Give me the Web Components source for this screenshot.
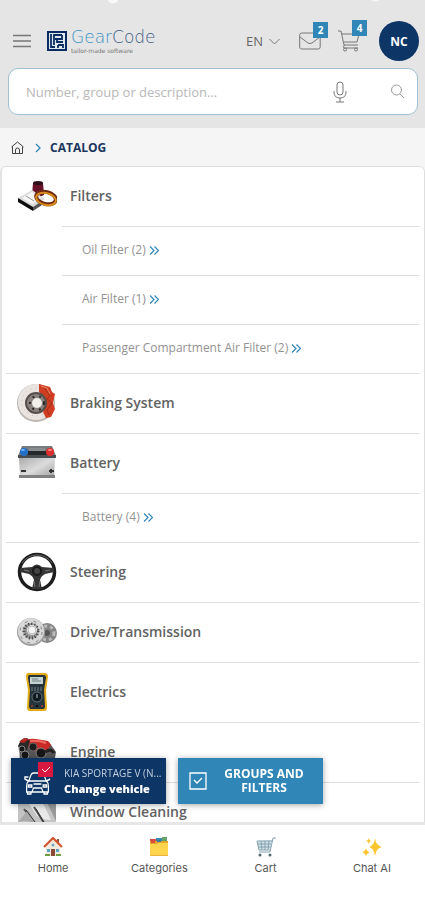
<!DOCTYPE html>
<html lang="en">
<head>
<meta charset="utf-8">
<meta name="viewport" content="width=device-width, initial-scale=1">
<title>GearCode - Catalog</title>
<style>
	html, body {
		margin: 0;
		height: 100%;
	}
	body {
		font-family: "Open Sans", "Noto Sans", sans-serif;
		color: #666;
		background: #fff;
		--navy: #0d3566;
		--blue: #2f86b7;
		--line: #dedede;
	}
</style>
</head>
<body>

<catalog-app>
	<app-header slot="header" user="NC" lang-code="EN" messages="2" items="4"></app-header>
	<bread-crumb slot="header" current="CATALOG"></bread-crumb>

	<catalog-group label="Filters">
		<svg slot="picture" width="40" height="40" viewBox="0 0 40 40">
			<path d="M16 7q5-2 10 0l1 12q-6 3-12 0z" fill="#671128"/>
			<ellipse cx="21" cy="7" rx="5" ry="2" fill="#2d0d16"/>
			<path d="M1 22l14-8 13 9-12 8z" fill="#dcdcdc"/>
			<path d="M5 22l10-6 9 6-9 6z" fill="#f6f6f6"/>
			<path d="M9 20l8 5" stroke="#999" fill="none"/>
			<path d="M1 22l15 9v4L1 26z" fill="#0d0d0d"/>
			<path d="M16 31l9-6v4l-9 6z" fill="#555"/>
			<ellipse cx="29" cy="22" rx="10" ry="6" transform="rotate(14 29 22)" fill="none" stroke="#6f2b12" stroke-width="4"/>
			<ellipse cx="29" cy="23" rx="10" ry="6" transform="rotate(14 29 23)" fill="none" stroke="#d98b1d" stroke-width="2"/>
		</svg>
		<sub-group count="2">Oil Filter</sub-group>
		<sub-group count="1">Air Filter</sub-group>
		<sub-group count="2">Passenger Compartment Air Filter</sub-group>
	</catalog-group>

	<catalog-group label="Braking System">
		<svg slot="picture" width="40" height="40" viewBox="0 0 40 40">
			<circle cx="19" cy="20" r="19" fill="#bdb5af"/>
			<circle cx="19" cy="19" r="18" fill="#e9e4e0"/>
			<circle cx="19" cy="19" r="14" fill="none" stroke="#c6beb8" stroke-dasharray="1 4"/>
			<path d="M22 1l11 3 2 5 3 2-2 9 2 6-4 8-5 1-3-6 3-8-3-8-4-4z" fill="#cf3d22"/>
			<path d="M27 4l6 9-3 3 5 4-5 7 2 5" stroke="#a82d18" fill="none"/>
			<path d="M24 3l6 2 3 6" stroke="#f08b6a" fill="none"/>
			<circle cx="19" cy="20" r="11" fill="#554e4a"/>
			<circle cx="19" cy="20" r="9" fill="#8a827d"/>
			<circle cx="20" cy="20" r="5" fill="#f1efec"/>
			<circle cx="20" cy="20" r="7" fill="none" stroke="#2b2725" stroke-width="2" stroke-dasharray="2 5"/>
		</svg>
	</catalog-group>

	<catalog-group label="Battery">
		<svg slot="picture" width="40" height="40" viewBox="0 0 40 40">
			<linearGradient id="case" x2="1" y2="1"><stop stop-color="#aaa"/><stop offset=".5" stop-color="#dcdcdc"/><stop offset="1" stop-color="#9a9a9a"/></linearGradient>
			<path d="M5 3h30l4 10H1z" fill="#777b7e"/>
			<path d="M11 8h19l2 5H10z" fill="#25282b"/>
			<path d="M12 5h16v3H12z" fill="#8a8d8f"/>
			<path d="M1 12h38v3H1z" fill="#4a4e51"/>
			<path d="M2 15h36l-1 20H3z" fill="url(#case)"/>
			<path d="M2 32h36v3H2z" fill="#808080"/>
			<ellipse cx="7" cy="9" rx="4" ry="4" fill="#236fc7"/>
			<ellipse cx="6" cy="7" rx="2" ry="1" fill="#75b7ff"/>
			<ellipse cx="33" cy="9" rx="4" ry="4" fill="#dc2e2e"/>
			<ellipse cx="33" cy="7" rx="2" ry="1" fill="#ff8b82"/>
			<path d="M4 28h5M32 28h5M34 26v4" stroke="#333" stroke-width="2"/>
		</svg>
		<sub-group count="4">Battery</sub-group>
	</catalog-group>

	<catalog-group label="Steering">
		<svg slot="picture" width="40" height="40" viewBox="0 0 40 40">
			<circle cx="20" cy="20" r="17.5" fill="none" stroke="#1d1d1d" stroke-width="3.5"/>
			<path d="M5 11a18 18 0 0 1 30 0" fill="none" stroke="#666" stroke-width="1"/>
			<path d="M3 16l12-1q5-5 10 0l12 1v4l-9 2q-4 2-5 6l2 9H15l2-9q-1-4-5-6l-9-2z" fill="#353535"/>
			<circle cx="20" cy="19" r="5" fill="#1a1a1a"/>
			<circle cx="20" cy="19" r="3" fill="#444"/>
			<path d="M17 29l1 6M23 29l-1 6M7 18l5 1M33 18l-5 1" stroke="#777" fill="none"/>
		</svg>
	</catalog-group>

	<catalog-group label="Drive/Transmission">
		<svg slot="picture" width="40" height="40" viewBox="0 0 40 40">
			<circle cx="30" cy="21" r="10" fill="#858585"/>
			<circle cx="30" cy="21" r="7" fill="none" stroke="#bbb" stroke-width="3" stroke-dasharray="3 3"/>
			<circle cx="30" cy="21" r="3" fill="#555"/>
			<circle cx="14" cy="20" r="14" fill="#a0a0a0"/>
			<circle cx="14" cy="19" r="13" fill="#d8d8d8"/>
			<circle cx="14" cy="20" r="11" fill="none" stroke="#888" stroke-dasharray="3 6"/>
			<circle cx="14" cy="19" r="8" fill="#999"/>
			<circle cx="14" cy="19" r="7" fill="none" stroke="#444" stroke-width="3" stroke-dasharray="1 2"/>
			<circle cx="15" cy="18" r="5" fill="#f5f5f5"/>
			<circle cx="15" cy="18" r="4" fill="none" stroke="#b5b5b5"/>
		</svg>
	</catalog-group>

	<catalog-group label="Electrics">
		<svg slot="picture" width="40" height="40" viewBox="0 0 40 40">
			<path d="M11 1h17q3 0 3 4l-2 13 1 18q0 3-3 3H13q-3 0-3-3l1-18-2-13q0-4 2-4z" fill="#e4ab18"/>
			<path d="M12 3h15q2 0 2 3l-2 12 1 16q0 3-2 3H14q-2 0-2-3l1-16-2-12q0-3 1-3z" fill="#26343b"/>
			<path d="M13 5h13v7H13z" fill="#c5d2d2"/>
			<path d="M15 9h9M15 7h6" stroke="#718386"/>
			<path d="M14 16h12M14 18h12" stroke="#72838a" stroke-dasharray="2 1"/>
			<circle cx="20" cy="25" r="5" fill="#111a20" stroke="#60727a"/>
			<path d="M20 22v4" stroke="#aebbc0"/>
			<circle cx="15" cy="34" r="1" fill="#ad3b31"/><circle cx="20" cy="34" r="1" fill="#000"/><circle cx="25" cy="34" r="1" fill="#ad3b31"/>
		</svg>
	</catalog-group>

	<catalog-group label="Engine">
		<svg slot="picture" width="40" height="40" viewBox="0 0 40 40">
			<path d="M2 12l6-4 24 2 7 10-2 12-22 6L3 30z" fill="#555"/>
			<path d="M9 8q5-2 10-1l12 2 3 4-4 5-10 2-8-3z" fill="#c92a25"/>
			<path d="M13 9q8-1 16 2" fill="none" stroke="#ee6a5e" stroke-width="2"/>
			<path d="M1 14l3-6 6-2 3 3-3 9-6 3z" fill="#292929"/>
			<path d="M2 10l5-4 5 1-5 4z" fill="#b52622"/>
			<circle cx="16" cy="15" r="4" fill="#1b1b1b" stroke="#666"/>
			<circle cx="5" cy="17" r="3" fill="#161616" stroke="#888"/>
			<circle cx="8" cy="23" r="4" fill="#161616" stroke="#888"/>
			<circle cx="24" cy="21" r="5" fill="#161616" stroke="#888"/>
			<path d="M28 20q6-4 9 1" fill="none" stroke="#222" stroke-width="3"/>
		</svg>
	</catalog-group>

	<catalog-group label="Window Cleaning">
		<svg slot="picture" width="40" height="40" viewBox="0 0 40 40">
			<path d="M1 3h38v27q-9 2-16 1T1 30z" fill="#c4c4c4"/>
			<path d="M6 3h16l12 25q-9 0-14-4z" fill="#e9e9e9"/>
			<path d="M26 3h13v26z" fill="#999"/>
			<path d="M7 17l14 18M17 15l12 19" stroke="#555" stroke-width="2"/>
			<path d="M1 30l10-12 9 16q-8-7-19-4z" fill="#aaa"/>
			<path d="M9 18l12 16M19 17l10 17" stroke="#333"/>
		</svg>
	</catalog-group>

	<quick-actions slot="actions" vehicle="KIA SPORTAGE V (N..."></quick-actions>

	<tab-bar slot="footer">
		<tab-item label="Home">
			<svg width="20" height="20" viewBox="0 0 20 20">
				<path d="M14 2h2v5h-2z" fill="#8f4b33"/>
				<path d="M3 9l7-7 7 7v10H3z" fill="#f2eadc"/>
				<path d="M1 10l9-9 9 9" fill="none" stroke="#d35532" stroke-width="2.2"/>
				<path d="M8 12h4v7H8z" fill="#8b4937"/>
				<path d="M4 12h3v3H4zM13 12h3v3h-3z" fill="#5ca5c5"/>
				<circle cx="10" cy="8" r="1.5" fill="#71a8bd"/>
				<path d="M2 17h5v2H2zM13 17h5v2h-5z" fill="#6f9d42"/>
			</svg>
		</tab-item>
		<tab-item label="Categories">
			<svg width="20" height="20" viewBox="0 0 20 20">
				<path d="M1 2h7v5H1z" fill="#d94b3d"/>
				<path d="M7 1h6v6H7z" fill="#388baf"/>
				<path d="M13 0h5v7h-5z" fill="#64a369"/>
				<path d="M1 4h18v4H1z" fill="#e4a52e"/>
				<path d="M2 4h4v2H2z" fill="#d94b3d"/><path d="M8 3h4v2H8z" fill="#337da4"/>
				<path d="M1 7h7l2-1h9v13H1z" fill="#ffd44f"/>
				<path d="M1 18h18v1H1z" fill="#edb43b"/>
			</svg>
		</tab-item>
		<tab-item label="Cart">
			<svg width="20" height="20" viewBox="0 0 20 20" fill="none">
				<path d="M1 4l15-1-2 9-11 1z" fill="#d5e3e9"/>
				<path d="M20 1h-3l-3 14H3M1 4h15M2 7h13M2 10h13M3 13h11M1 4l2 9M5 4l1 9M9 4v9M13 4l-1 9" stroke="#83a2af"/>
				<circle cx="4" cy="18" r="1.5" fill="#536771"/><circle cx="14" cy="18" r="1.5" fill="#536771"/>
			</svg>
		</tab-item>
		<tab-item label="Chat AI">
			<svg width="20" height="20" viewBox="0 0 20 20" fill="#fbc52d">
				<path d="M13 1q1 8 7 9-6 1-7 9-1-8-6-9 5-1 6-9zM4 11q1 4 4 4-3 1-4 4-1-3-4-4 3 0 4-4zM7 1q0 3 3 3-3 0-3 3-1-3-3-3 2 0 3-3z"/>
			</svg>
		</tab-item>
	</tab-bar>
</catalog-app>

<script>
	// small helper: attach an open root and fill it
	function render(elem, html) {
		elem.attachShadow({mode: 'open'}).innerHTML = html;
	}

	class CatalogApp extends HTMLElement {
		connectedCallback() {
			render(this, `
				<style>
					:host {
						display: flex;
						flex-direction: column;
						height: 100vh;
						background: #f5f5f5;
					}
					.stage {
						position: relative;
						flex: 1;
						min-height: 0;
						display: flex;
					}
					main {
						flex: 1;
						overflow-y: auto;
						scrollbar-width: none;
						background: #fff;
						border: 1px solid var(--line);
						border-left: 2px solid #e4e4e4;
						border-bottom: 0;
						border-radius: 6px 6px 0 0;
						padding: 0 5px 0 4px;
					}
					.actions {
						position: absolute;
						left: 11px;
						right: 11px;
						bottom: 18px;
					}
				</style>
				<slot name="header"></slot>
				<div class="stage">
					<main><slot></slot></main>
					<div class="actions"><slot name="actions"></slot></div>
				</div>
				<slot name="footer"></slot>
			`);
		}
	}

	class BrandLogo extends HTMLElement {
		connectedCallback() {
			render(this, `
				<style>
					:host { display: block; }
					a {
						display: flex;
						align-items: center;
						gap: 4px;
						text-decoration: none;
						font-family: "DejaVu Sans", sans-serif;
					}
					svg { display: block; }
					.name {
						display: block;
						font-size: 17px;
						line-height: 20px;
						font-weight: 200;
						color: #3b5c86;
					}
					.name b { font-weight: 200; color: #3a92c4; }
					.tag {
						display: block;
						font-size: 6px;
						line-height: 8px;
						color: #777;
					}
				</style>
				<a href="#">
					<svg width="20" height="20" viewBox="0 0 20 20" fill="none">
						<rect x="1" y="1" width="18" height="18" fill="#dfe7ef" stroke="#0b2c63" stroke-width="2"/>
						<path d="M4 3v13h4M7 14V4h8M15 4v4h-5v3h6M8 8h4M11 14v3M11 14h5v3" stroke="#0b2c63" stroke-width="1.8"/>
					</svg>
					<span>
						<span class="name"><b>Gear</b>Code</span>
						<span class="tag">tailor-made software</span>
					</span>
				</a>
			`);
		}
	}

	class CountBadge extends HTMLElement {
		connectedCallback() {
			render(this, `
				<style>
					:host {
						display: block;
						width: 15px;
						background: var(--blue);
						color: #fff;
						font-size: 10px;
						line-height: 16px;
						font-weight: 700;
						text-align: center;
					}
				</style>
				<slot></slot>
			`);
		}
	}

	class AppHeader extends HTMLElement {
		connectedCallback() {
			render(this, `
				<style>
					:host {
						display: block;
						background:
							radial-gradient(circle at 113px -2px, #f8f8f8 5px, transparent 6px),
							radial-gradient(circle at 375px -4px, #f8f8f8 5px, transparent 6px),
							#e5e5e5;
						padding: 21px 6px 13px 8px;
					}
					.bar {
						display: flex;
						align-items: center;
						height: 40px;
						padding-left: 5px;
						margin-bottom: 7px;
					}
					button {
						display: block;
						position: relative;
						margin: 0;
						padding: 0;
						border: 0;
						background: none;
						font: inherit;
						color: inherit;
						cursor: pointer;
					}
					svg {
						display: block;
						fill: none;
						stroke: #777;
					}
					brand-logo { margin: 0 auto 0 16px; }
					.lang {
						display: flex;
						align-items: center;
						gap: 6px;
						font-size: 13px;
						line-height: 20px;
						margin-right: 19px;
					}
					.mail { margin-right: 17px; }
					.cart { margin-right: 19px; }
					count-badge {
						position: absolute;
						right: -7px;
						top: -10px;
					}
					.user {
						width: 40px;
						height: 40px;
						border-radius: 50%;
						background: var(--navy);
						color: #fff;
						font-size: 12px;
						font-weight: 700;
					}
					form {
						display: flex;
						align-items: center;
						height: 45px;
						margin-right: 1px;
						border: 1px solid #9fc1d5;
						border-radius: 10px;
						background: #fff;
						padding: 0 12px 0 17px;
					}
					input {
						flex: 1;
						min-width: 0;
						border: 0;
						padding: 0;
						outline: 0;
						background: none;
						font: inherit;
						font-size: 13px;
						line-height: 20px;
						color: #666;
					}
					input::placeholder { color: #b8b8b8; opacity: 1; }
					.mic { margin-right: 43px; }
				</style>
				<div class="bar">
					<button aria-label="Menu">
						<svg width="18" height="14" viewBox="0 0 18 14" stroke-width="1.3"><path d="M0 1.5h18M0 7h18M0 12.500h18"/></svg>
					</button>
					<brand-logo></brand-logo>
					<button class="lang">${this.getAttribute('lang-code')}
						<svg width="11" height="7" viewBox="0 0 11 7"><path d="M.5 1l5 5 5-5"/></svg>
					</button>
					<button class="mail" aria-label="Messages">
						<svg width="22" height="18" viewBox="0 0 22 18"><rect x=".7" y="1" width="20.500" height="16" rx="2"/><path d="M1 5l8 6q2 1 4 0l8-6"/></svg>
						<count-badge>${this.getAttribute('messages')}</count-badge>
					</button>
					<button class="cart" aria-label="Cart">
						<svg width="22" height="22" viewBox="0 0 22 22"><path d="M0 1h3l3 14h14M4 4h17l-2 8H6M7 15q-3 1-1 3h14"/><circle cx="7" cy="19.500" r="1.500"/><circle cx="18" cy="19.500" r="1.500"/></svg>
						<count-badge>${this.getAttribute('items')}</count-badge>
					</button>
					<button class="user" aria-label="Account">${this.getAttribute('user')}</button>
				</div>
				<form role="search">
					<input type="search" aria-label="Search" placeholder="Number, group or description...">
					<button class="mic" type="button" aria-label="Voice search">
						<svg width="14" height="22" viewBox="0 0 14 22"><rect x="4" y="1" width="6" height="13" rx="3"/><path d="M1 10v1q0 6 6 6t6-6v-1M7 17v4M3 21h8"/></svg>
					</button>
					<button type="submit" aria-label="Search">
						<svg width="15" height="15" viewBox="0 0 15 15" style="stroke:#999"><circle cx="6.500" cy="6" r="5"/><path d="M10 10l4 4"/></svg>
					</button>
				</form>
			`);
		}
	}

	class BreadCrumb extends HTMLElement {
		connectedCallback() {
			render(this, `
				<style>
					:host { display: block; }
					nav {
						display: flex;
						align-items: center;
						height: 38px;
						padding: 1px 11px 0;
						box-sizing: border-box;
					}
					svg { display: block; fill: none; }
					.sep { margin: 0 9px 0 11px; }
					span {
						font-size: 12px;
						line-height: 16px;
						font-weight: 700;
						color: #1b365d;
					}
				</style>
				<nav aria-label="Breadcrumb">
					<a href="#" aria-label="Home">
						<svg width="13" height="14" viewBox="0 0 13 14" stroke="#444"><path d="M.5 6l6-5 6 5M1.500 5.500v7h10v-7M4.500 12.500V9q0-2 2-2t2 2v3.500"/></svg>
					</a>
					<svg class="sep" width="6" height="10" viewBox="0 0 6 10" stroke="#2f86b7" stroke-width="1.300"><path d="M1 1l4 4-4 4"/></svg>
					<span aria-current="page">${this.getAttribute('current')}</span>
				</nav>
			`);
		}
	}

	class CatalogGroup extends HTMLElement {
		connectedCallback() {
			render(this, `
				<style>
					:host {
						display: block;
						border-bottom: 1px solid var(--line);
					}
					a {
						display: flex;
						align-items: center;
						gap: 13px;
						box-sizing: border-box;
						height: 59px;
						padding: 0 0 2px 11px;
						color: #626262;
						text-decoration: none;
						font-size: 14px;
						line-height: 20px;
						font-weight: 600;
					}
					::slotted(svg) { display: block; flex: none; }
					.subs { padding-left: 56px; }
				</style>
				<a href="#"><slot name="picture"></slot><span>${this.getAttribute('label')}</span></a>
				<div class="subs"><slot></slot></div>
			`);
		}
	}

	class SubGroup extends HTMLElement {
		connectedCallback() {
			render(this, `
				<style>
					:host {
						display: block;
						border-top: 1px solid var(--line);
					}
					a {
						display: flex;
						align-items: center;
						gap: 3px;
						box-sizing: border-box;
						height: 48px;
						padding: 0 0 2px 20px;
						color: #929292;
						text-decoration: none;
						font-size: 12px;
						line-height: 18px;
					}
					svg { display: block; }
				</style>
				<a href="#">
					<span><slot></slot> (${this.getAttribute('count')})</span>
					<svg width="10" height="9" viewBox="0 0 10 9" fill="none" stroke="#2f86b7" stroke-width="1.200"><path d="M1 .5l4 4-4 4M5.500.5l4 4-4 4"/></svg>
				</a>
			`);
		}
	}

	class QuickActions extends HTMLElement {
		connectedCallback() {
			render(this, `
				<style>
					:host {
						display: flex;
						gap: 12px;
					}
					button {
						display: flex;
						align-items: center;
						box-sizing: border-box;
						height: 46px;
						margin: 0;
						border: 0;
						color: #fff;
						font: inherit;
						font-size: 12px;
						line-height: 14px;
						font-weight: 700;
						box-shadow: 0 1px 6px rgba(0, 0, 0, 0.35);
						cursor: pointer;
					}
					svg { display: block; fill: none; stroke: #fff; flex: none; }
					.vehicle {
						width: 155px;
						gap: 11px;
						padding: 0 6px 0 12px;
						background: var(--navy);
						text-align: left;
					}
					.vehicle small {
						display: block;
						font-size: 10px;
						line-height: 16px;
						font-weight: 400;
						color: #c3cfde;
						white-space: nowrap;
					}
					.vehicle strong {
						display: block;
						font-size: 11px;
						line-height: 16px;
						font-weight: 800;
						white-space: nowrap;
					}
					.groups {
						width: 145px;
						gap: 10px;
						padding: 0 12px 0 11px;
						background: var(--blue);
					}
					.groups span { flex: 1; text-align: center; }
				</style>
				<button class="vehicle">
					<svg width="30" height="38" viewBox="0 0 30 38">
						<path transform="translate(1 0) scale(.87 1)" d="M5 20l3-7q1-2 3-2h9q2 0 3 2l3 7M5 19h21q2 2 2 5v6H3v-6q0-3 2-5zM5 19l-4-2v-2h4M26 19l4-2M4 30v2h4v-2M23 30v2h4v-2M9 30l2-4h9l2 4M5 23h4v2H5zM22 23h4v2h-4zM11 22h9" stroke-width="1.400"/>
						<path d="M15 0h15v15H15z" fill="#d71940" stroke="none"/>
						<path d="M19 7l3 3 5-5"/>
					</svg>
					<span><small>${this.getAttribute('vehicle')}</small><strong>Change vehicle</strong></span>
				</button>
				<button class="groups">
					<svg width="18" height="18" viewBox="0 0 18 18"><path d="M1 1h16v16H1z" stroke-width="1.300"/><path d="M5 8l3 3 5-5" stroke-width="1.300"/></svg>
					<span>GROUPS AND FILTERS</span>
				</button>
			`);
		}
	}

	class TabBar extends HTMLElement {
		connectedCallback() {
			render(this, `
				<style>
					:host { display: block; }
					nav {
						display: grid;
						grid-template-columns: repeat(4, 1fr);
						box-sizing: border-box;
						height: 78px;
						border-top: 3px solid #e6e6e6;
						background: #fff;
						padding-top: 12px;
					}
				</style>
				<nav><slot></slot></nav>
			`);
		}
	}

	class TabItem extends HTMLElement {
		connectedCallback() {
			render(this, `
				<style>
					:host { display: block; }
					a {
						display: flex;
						flex-direction: column;
						align-items: center;
						gap: 3px;
						color: #555;
						text-decoration: none;
						font-family: Inter, sans-serif;
						font-size: 11px;
						line-height: 16px;
					}
					::slotted(svg) { display: block; }
				</style>
				<a href="#"><slot></slot><span>${this.getAttribute('label')}</span></a>
			`);
		}
	}

	customElements.define('catalog-app', CatalogApp);
	customElements.define('brand-logo', BrandLogo);
	customElements.define('count-badge', CountBadge);
	customElements.define('app-header', AppHeader);
	customElements.define('bread-crumb', BreadCrumb);
	customElements.define('catalog-group', CatalogGroup);
	customElements.define('sub-group', SubGroup);
	customElements.define('quick-actions', QuickActions);
	customElements.define('tab-bar', TabBar);
	customElements.define('tab-item', TabItem);
</script>
</body>
</html>
